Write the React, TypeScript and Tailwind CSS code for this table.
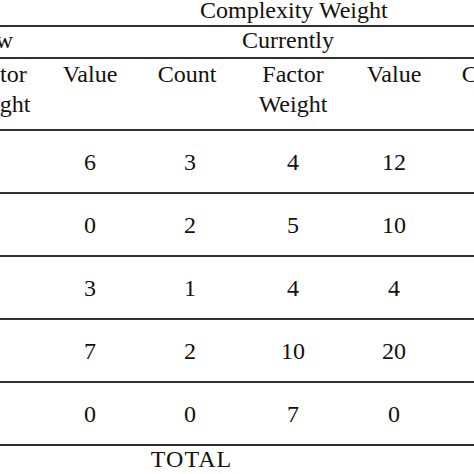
const rows = [
  ["1", "3", "6", "3", "4", "12", "2"],
  ["0", "4", "0", "2", "5", "10", "1"],
  ["1", "3", "3", "1", "4", "4", "0"],
  ["1", "7", "7", "2", "10", "20", "2"],
  ["0", "5", "0", "0", "7", "0", "0"],
];

const grid = "grid grid-cols-[100px_92px_96px_104px_102px_100px_100px_100px]";

export default function App() {
  return (
    <div className="h-[474px] w-[474px] overflow-hidden bg-white text-[#111] font-['Liberation_Serif',serif] text-[24px]">
      <div className="ml-[-150px] w-[800px]">
        {/* group title */}
        <div className="h-[27px] border-b-2 border-[#2f2f2f] pl-[350px] leading-[20px]">
          Complexity Weight
        </div>

        <div className={`${grid} h-[32px] border-b-2 border-[#2f2f2f] leading-[26px]`}>
          <div className="col-span-3 text-center pr-[7px]">New</div>
          <div className="col-span-3 text-center pr-[6px]">Currently</div>
        </div>

        <div className={`${grid} h-[72px] border-b-2 border-[#2f2f2f] leading-[30px] text-center`}>
          <div>Count</div>
          <div>
            Factor
            <br />
            Weight
          </div>
          <div>Value</div>
          <div className="pr-[6px]">Count</div>
          <div>
            Factor
            <br />
            Weight
          </div>
          <div>Value</div>
          <div className="pr-[6px]">Count</div>
          <div>
            Factor
            <br />
            Weight
          </div>
        </div>

        {rows.map((row, i) => (
          <div
            key={i}
            className={`${grid} h-[63px] items-center border-b-2 border-[#2f2f2f] leading-[30px] text-center`}
          >
            {row.map((cell, j) => (
              <div key={j} className={j === 1 ? "pr-[12px]" : ""}>
                {cell}
              </div>
            ))}
          </div>
        ))}

        <div className={`${grid} leading-[26px] text-center`}>
          <div className="col-start-4 pl-[3px] tracking-[1px]">TOTAL</div>
        </div>
      </div>
    </div>
  );
}
